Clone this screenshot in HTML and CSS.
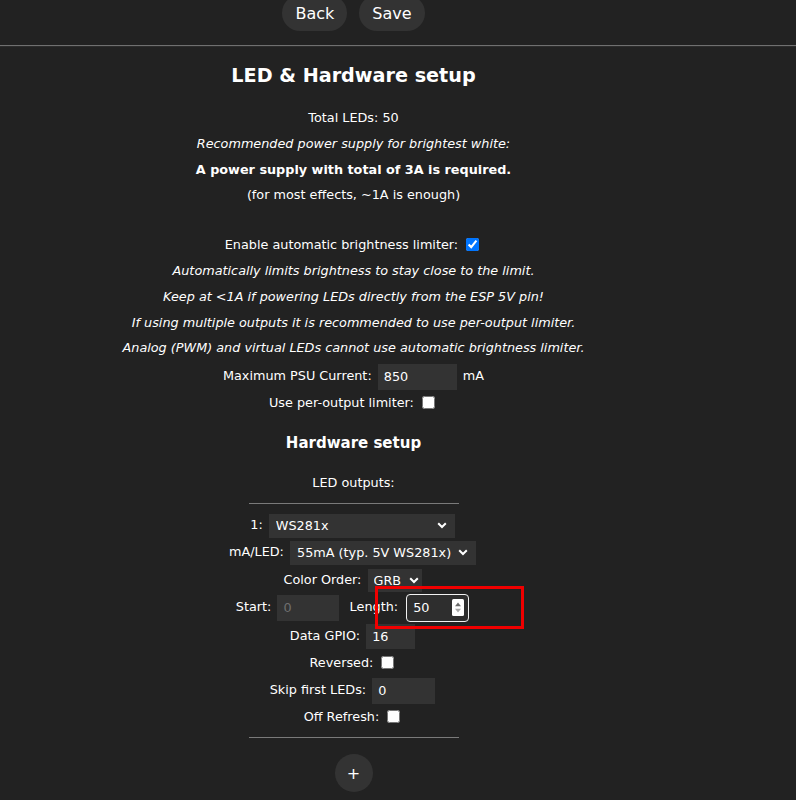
FILE: index.html
```html
<!DOCTYPE html>
<html>
<head>
<meta charset="utf-8">
<title>LED Settings</title>
<link rel="stylesheet" href="styles.css">
</head>
<body>
<div class="toprow">
  <div class="btns"><button class="btn">Back</button><button class="btn">Save</button></div>
  <div class="tophr"></div>
</div>
<div class="page">
  <h2 class="title">LED &amp; Hardware setup</h2>
  <div class="row h26">Total LEDs: 50</div>
  <div class="row h26"><i>Recommended power supply for brightest white:</i></div>
  <div class="row h25"><b>A power supply with total of 3A is required.</b></div>
  <div class="row h25">(for most effects, ~1A is enough)</div>
  <div class="row h25"></div>
  <div class="row h26">Enable automatic brightness limiter: <input class="cb" type="checkbox" checked></div>
  <div class="row h26"><i>Automatically limits brightness to stay close to the limit.</i></div>
  <div class="row h26"><i>Keep at &lt;1A if powering LEDs directly from the ESP 5V pin!</i></div>
  <div class="row h25"><i>If using multiple outputs it is recommended to use per-output limiter.</i></div>
  <div class="row h26"><i>Analog (PWM) and virtual LEDs cannot use automatic brightness limiter.</i></div>
  <div class="row h29">Maximum PSU Current: <input class="inp w79" type="text" value="850"> mA</div>
  <div class="row h25">Use per-output limiter: <input class="cb" type="checkbox"></div>
  <h3 class="sub">Hardware setup</h3>
  <div class="row h24">LED outputs:</div>
  <div class="sml first"></div>
  <div class="row h27">1: <span class="sel w186"><select><option>WS281x</option></select><svg class="chev" width="10" height="7" viewBox="0 0 10 7"><polyline points="1.2,1.2 5,5 8.8,1.2" fill="none" stroke="#fff" stroke-width="2"/></svg></span></div>
  <div class="row h28">mA/LED: <span class="sel w186"><select><option>55mA (typ. 5V WS281x)</option></select><svg class="chev" width="10" height="7" viewBox="0 0 10 7"><polyline points="1.2,1.2 5,5 8.8,1.2" fill="none" stroke="#fff" stroke-width="2"/></svg></span></div>
  <div class="row h27">Color Order: <span class="sel w54"><select><option>GRB</option></select><svg class="chev" width="10" height="7" viewBox="0 0 10 7"><polyline points="1.2,1.2 5,5 8.8,1.2" fill="none" stroke="#fff" stroke-width="2"/></svg></span></div>
  <div class="row h28">Start: <input class="inp w62 dis" type="text" value="0" disabled>&nbsp; Length: <span class="focus"><input class="finp" type="text" value="50"><svg class="spin" width="12" height="17" viewBox="0 0 12 17"><rect width="12" height="17" rx="1.5" fill="#fff"/><path d="M3 7.2 L6 3.6 L9 7.2Z" fill="#6a6a6a"/><path d="M3 9.8 L6 13.4 L9 9.8Z" fill="#a8a8a8"/></svg></span></div>
  <div class="row h29">Data GPIO: <input class="inp w49 h25i" type="text" value="16"></div>
  <div class="row h26">Reversed: <input class="cb" type="checkbox"></div>
  <div class="row h28">Skip first LEDs: <input class="inp w63" type="text" value="0"></div>
  <div class="row h25">Off Refresh: <input class="cb" type="checkbox"></div>
  <div class="sml"></div>
  <div class="addrow"><button class="add">+</button></div>
</div>
<div class="mark"></div>
</body>
</html>
```

FILE: styles.css
```css
html, body {
  margin: 0;
  padding: 0;
  background: #222;
}
body {
  position: relative;
  color: #fff;
  font-family: "DejaVu Sans", Verdana, sans-serif;
  font-size: 12.8px;
  height: 800px;
  overflow: hidden;
}
.toprow {
  display: flow-root;
  height: 47px;
}
.btns {
  width: 707px;
  display: flex;
  justify-content: center;
  gap: 12px;
  margin-top: -5px;
}
.btn {
  background: #333;
  color: #fff;
  border: 0;
  border-radius: 18px;
  height: 36px;
  padding: 0 13px;
  font-family: "DejaVu Sans", Verdana, sans-serif;
  font-size: 16px;
  cursor: pointer;
}
.tophr {
  margin-top: 14px;
  height: 1px;
  background: #707070;
  border-bottom: 1px solid #2c2c2c;
}
.page {
  width: 707px;
  text-align: center;
}
.title {
  margin: 0;
  height: 58px;
  line-height: 57px;
  font-size: 19.2px;
  font-weight: bold;
}
.sub {
  margin: 0;
  height: 56px;
  line-height: 56px;
  font-size: 15px;
  font-weight: bold;
}
.row {
  white-space: nowrap;
}
.h24 { height: 24px; line-height: 24px; }
.h25 { height: 25px; line-height: 25px; }
.h26 { height: 26px; line-height: 26px; }
.h27 { height: 27px; line-height: 27px; }
.h28 { height: 28px; line-height: 28px; }
.h29 { height: 29px; line-height: 29px; }
.cb {
  width: 13px;
  height: 13px;
  margin: 0 3px 0 4px;
  vertical-align: middle;
  position: relative;
  top: -1px;
}
.inp {
  box-sizing: border-box;
  height: 26px;
  border: 0;
  margin: 0 2px;
  padding: 0 6px;
  background: #333;
  color: #fff;
  font-family: "DejaVu Sans", Verdana, sans-serif;
  font-size: 12.8px;
  vertical-align: middle;
  outline: none;
}
.h25i { height: 25px; }
.w79 { width: 79px; }
.w62 { width: 62px; }
.w63 { width: 63px; }
.w49 { width: 49px; }
.dis { color: #6f6f6f; }
.sel {
  display: inline-flex;
  align-items: center;
  box-sizing: border-box;
  height: 23px;
  margin: 0 2px;
  background: #333;
  vertical-align: middle;
  padding-right: 8px;
}
.sel select {
  appearance: none;
  -webkit-appearance: none;
  flex: 1;
  min-width: 0;
  background: transparent;
  border: 0;
  color: #fff;
  font-family: "DejaVu Sans", Verdana, sans-serif;
  font-size: 12.8px;
  padding: 0 0 0 7px;
  outline: none;
}
.w186 { width: 186px; height: 24px; }
.w54 { width: 54px; padding-right: 3px; }
.w54 select { padding-left: 6px; }
.chev { flex: none; }
.focus {
  display: inline-flex;
  align-items: center;
  box-sizing: border-box;
  width: 63px;
  height: 28px;
  margin: 0 2px 0 4px;
  border: 1px solid #f2f2f2;
  border-radius: 4px;
  background: #2e2e2e;
  vertical-align: middle;
  padding-right: 4px;
}
.finp {
  flex: 1;
  min-width: 0;
  background: transparent;
  border: 0;
  color: #fff;
  font-family: "DejaVu Sans", Verdana, sans-serif;
  font-size: 12.8px;
  padding: 0 0 0 6px;
  outline: none;
}
.spin { flex: none; }
.sml {
  width: 210px;
  height: 1px;
  margin: 8px auto;
  background: #7a7a7a;
}
.sml.first {
  margin-bottom: 7px;
}
.addrow {
  padding-top: 8px;
}
.add {
  width: 38px;
  height: 38px;
  border-radius: 50%;
  border: 0;
  background: #333;
  color: #fff;
  font-family: "DejaVu Sans", Verdana, sans-serif;
  font-size: 16px;
  padding: 0;
  cursor: pointer;
}
.mark {
  position: absolute;
  left: 375px;
  top: 586px;
  width: 149px;
  height: 43px;
  box-sizing: border-box;
  border: 3px solid #f00000;
}
```
